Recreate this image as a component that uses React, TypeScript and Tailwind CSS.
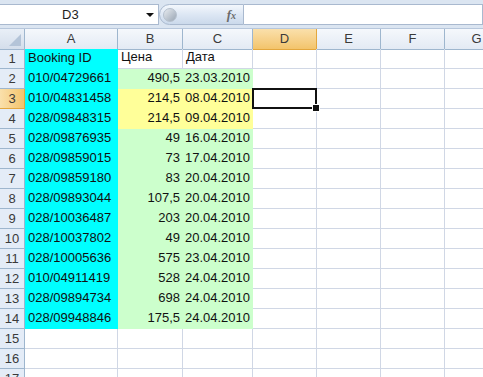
import React from 'react';

// Excel 2007 style sheet view: formula bar, column headers and a small data table

type Row = { id: string; price: string; date: string };

const ROWS: Row[] = [
  { id: '010/04729661', price: '490,5', date: '23.03.2010' },
  { id: '010/04831458', price: '214,5', date: '08.04.2010' },
  { id: '028/09848315', price: '214,5', date: '09.04.2010' },
  { id: '028/09876935', price: '49', date: '16.04.2010' },
  { id: '028/09859015', price: '73', date: '17.04.2010' },
  { id: '028/09859180', price: '83', date: '20.04.2010' },
  { id: '028/09893044', price: '107,5', date: '20.04.2010' },
  { id: '028/10036487', price: '203', date: '20.04.2010' },
  { id: '028/10037802', price: '49', date: '20.04.2010' },
  { id: '028/10005636', price: '575', date: '23.04.2010' },
  { id: '010/04911419', price: '528', date: '24.04.2010' },
  { id: '028/09894734', price: '698', date: '24.04.2010' },
  { id: '028/09948846', price: '175,5', date: '24.04.2010' },
];

const COLS = ['A', 'B', 'C', 'D', 'E', 'F', 'G'];
// row header + columns A..G (G runs off the right edge)
const GRID = 'grid grid-cols-[25px_93px_65px_70px_64px_64px_64px_64px]';
const font = { fontFamily: '"Liberation Sans", Arial, sans-serif' };

function FormulaBar() {
  return (
    <div className="w-[483px] h-[29px] flex bg-[#dbe5f1] pt-[4px] pb-[3px] border-b border-[#b7c7dc]">
      <div className="w-[159px] bg-white border-y border-r border-[#a9b9cf] flex items-center relative">
        <span className="ml-[62px] text-[13px] text-[#1e1e1e]">D3</span>
        <span className="absolute left-[146px] top-[8px] w-0 h-0 border-l-[4px] border-r-[4px] border-t-[4px] border-l-transparent border-r-transparent border-t-[#111]" />
      </div>
      <div className="w-[85px] rounded-l-full bg-gradient-to-b from-[#f3f7fc] via-[#dde7f4] to-[#cbd9eb] border border-[#a9b9cf] flex items-center justify-between pl-[3px] pr-[7px]">
        <span className="w-[14px] h-[14px] rounded-full bg-gradient-to-br from-[#e8ecf1] to-[#9aa6b4] border border-[#b5c0cd]" />
        <span className="text-[13px] italic font-bold text-[#6b6b6b]" style={{ fontFamily: '"Liberation Serif", serif' }}>
          f<span className="text-[10px]">x</span>
        </span>
      </div>
      <div className="flex-1 bg-white border border-l-0 border-[#a9b9cf]" />
    </div>
  );
}

function ColumnHeaders() {
  return (
    <div className={`${GRID} h-[20px]`}>
      <div className="relative bg-gradient-to-b from-[#e9eff7] to-[#d4deeb] border-r border-b border-[#9eb6ce]">
        <span className="absolute right-[3px] bottom-[3px] w-0 h-0 border-l-[12px] border-l-transparent border-b-[12px] border-b-[#b4c4d8]" />
      </div>
      {COLS.map((c) =>
        c === 'D' ? (
          <div key={c} className="flex items-center justify-center bg-gradient-to-b from-[#fae0ab] to-[#f3c46b] border-r border-b border-[#e3a73e] text-[13px] text-[#3a3a3a]">
            {c}
          </div>
        ) : (
          <div key={c} className="flex items-center justify-center bg-gradient-to-b from-[#f5f8fc] to-[#e3eaf4] border-r border-b border-[#9eb6ce] text-[13px] text-[#3a3a3a]">
            {c}
          </div>
        ),
      )}
    </div>
  );
}

function RowHeader({ n, active }: { n: number; active?: boolean }) {
  return active ? (
    <div className="flex items-center justify-center bg-gradient-to-r from-[#fae0ab] to-[#f3c46b] border-r border-b border-[#e3a73e] text-[13px] text-[#3a3a3a]">
      {n}
    </div>
  ) : (
    <div className="flex items-center justify-center bg-[#e4ecf7] border-r border-b border-[#9eb6ce] text-[13px] text-[#3a3a3a]">
      {n}
    </div>
  );
}

// columns D..G
function EmptyCells({ selected }: { selected?: boolean }) {
  return (
    <>
      <div className="relative border-r border-b border-[#d0d7e5]">
        {selected && (
          <div className="absolute -left-[1px] -top-[1px] w-[65px] h-[21px] border-2 border-[#111] z-10">
            <span className="absolute -right-[4px] -bottom-[4px] w-[6px] h-[6px] bg-[#111] ring-1 ring-white" />
          </div>
        )}
      </div>
      <div className="border-r border-b border-[#d0d7e5]" />
      <div className="border-r border-b border-[#d0d7e5]" />
      <div className="border-r border-b border-[#d0d7e5]" />
    </>
  );
}

export default function App() {
  return (
    <div className="w-[483px] h-[377px] overflow-hidden bg-white text-[#111]" style={font}>
      <FormulaBar />
      <div className="w-[509px]">
        <ColumnHeaders />
        <div className={`${GRID} auto-rows-[20px]`}>
          {/* row 1: headings */}
          <RowHeader n={1} />
          <div className="flex items-end pl-[3px] pb-[2px] bg-[#00ffff] text-[13px]">Booking ID</div>
          <div className="flex items-end pl-[3px] pb-[2px] border-r border-b border-[#d0d7e5] text-[13px]">Цена</div>
          <div className="flex items-end pl-[3px] pb-[2px] border-r border-b border-[#d0d7e5] text-[13px]">Дата</div>
          <EmptyCells />

          {ROWS.map((r, i) => {
            const n = i + 2;
            const fill = n === 3 || n === 4 ? 'bg-[#ffff99]' : 'bg-[#ccffcc]';
            return (
              <React.Fragment key={n}>
                <RowHeader n={n} active={n === 3} />
                <div className="flex items-end pl-[3px] pb-[2px] bg-[#00ffff] text-[13px]">{r.id}</div>
                <div className={`flex items-end justify-end pr-[3px] pb-[2px] ${fill} text-[13px]`}>{r.price}</div>
                <div className={`flex items-end justify-end pr-[3px] pb-[2px] ${fill} text-[13px]`}>{r.date}</div>
                <EmptyCells selected={n === 3} />
              </React.Fragment>
            );
          })}

          {[15, 16, 17].map((n) => (
            <React.Fragment key={n}>
              <RowHeader n={n} />
              <div className="border-r border-b border-[#d0d7e5]" />
              <div className="border-r border-b border-[#d0d7e5]" />
              <div className="border-r border-b border-[#d0d7e5]" />
              <EmptyCells />
            </React.Fragment>
          ))}
        </div>
      </div>
    </div>
  );
}
